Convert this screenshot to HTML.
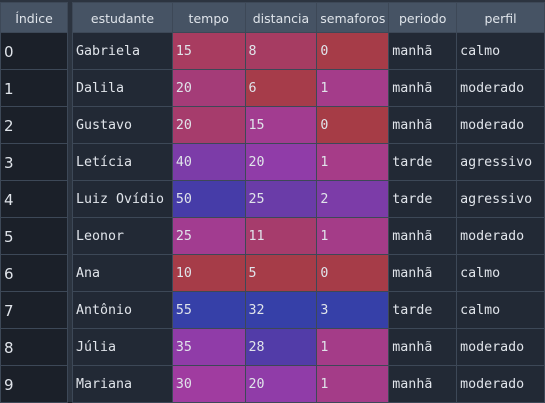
<!DOCTYPE html>
<html><head><meta charset="utf-8"><style>
body{margin:0;width:545px;height:402px;overflow:hidden;background:#1c222b;}
.w{position:absolute;left:0;top:0;width:545px;height:402px;background:#2c3440;}
table{border-collapse:collapse;table-layout:fixed;position:absolute;top:2px;}
td,th{border:1px solid #3d4857;padding:0 0 0 3px;height:35px;color:#e0e4ea;white-space:nowrap;overflow:hidden;box-sizing:content-box;}
th{height:27px;background:#465364;font:12.5px "DejaVu Sans","Liberation Sans",sans-serif;font-weight:normal;text-align:center;padding:2px 0 0 0;color:#dfe4ea;}
td{font:13.3px "DejaVu Sans Mono","Liberation Mono",monospace;background:#222935;padding-top:1px;}
#idx{left:0;width:68px;}
#idx td{background:#1b2029;font-family:"DejaVu Sans","Liberation Sans",sans-serif;font-size:15px;padding-left:3px;}
#dat{left:72px;}
</style></head><body><div class="w">
<table id="idx"><colgroup><col style="width:67px"></colgroup>
<tr><th>Índice</th></tr>
<tr><td>0</td></tr><tr><td>1</td></tr><tr><td>2</td></tr><tr><td>3</td></tr><tr><td>4</td></tr><tr><td>5</td></tr><tr><td>6</td></tr><tr><td>7</td></tr><tr><td>8</td></tr><tr><td>9</td></tr>
</table>
<table id="dat"><colgroup><col style="width:100px"><col style="width:73px"><col style="width:72px"><col style="width:72px"><col style="width:68px"><col style="width:88px"></colgroup>
<tr><th>estudante</th><th>tempo</th><th>distancia</th><th>semaforos</th><th>periodo</th><th>perfil</th></tr>
<tr><td>Gabriela</td><td style="background:#a83c60">15</td><td style="background:#a63c62">8</td><td style="background:#a63c48">0</td><td>manhã</td><td>calmo</td></tr>
<tr><td>Dalila</td><td style="background:#a43c78">20</td><td style="background:#a63c4a">6</td><td style="background:#a43c8a">1</td><td>manhã</td><td>moderado</td></tr>
<tr><td>Gustavo</td><td style="background:#a63c6c">20</td><td style="background:#a23c90">15</td><td style="background:#a63c46">0</td><td>manhã</td><td>moderado</td></tr>
<tr><td>Letícia</td><td style="background:#7c3ca8">40</td><td style="background:#903ca8">20</td><td style="background:#a63c88">1</td><td>tarde</td><td>agressivo</td></tr>
<tr><td>Luiz Ovídio</td><td style="background:#463ca8">50</td><td style="background:#6a3ca8">25</td><td style="background:#7c3ca8">2</td><td>tarde</td><td>agressivo</td></tr>
<tr><td>Leonor</td><td style="background:#a23c90">25</td><td style="background:#a63c6c">11</td><td style="background:#a43c88">1</td><td>manhã</td><td>moderado</td></tr>
<tr><td>Ana</td><td style="background:#a63c48">10</td><td style="background:#a63c48">5</td><td style="background:#a63c48">0</td><td>manhã</td><td>calmo</td></tr>
<tr><td>Antônio</td><td style="background:#3640a8">55</td><td style="background:#3640a8">32</td><td style="background:#3640a8">3</td><td>tarde</td><td>calmo</td></tr>
<tr><td>Júlia</td><td style="background:#903ca8">35</td><td style="background:#523ca8">28</td><td style="background:#a43c88">1</td><td>manhã</td><td>moderado</td></tr>
<tr><td>Mariana</td><td style="background:#a03ca0">30</td><td style="background:#903ca8">20</td><td style="background:#a43c88">1</td><td>manhã</td><td>moderado</td></tr>
</table>
</div></body></html>
